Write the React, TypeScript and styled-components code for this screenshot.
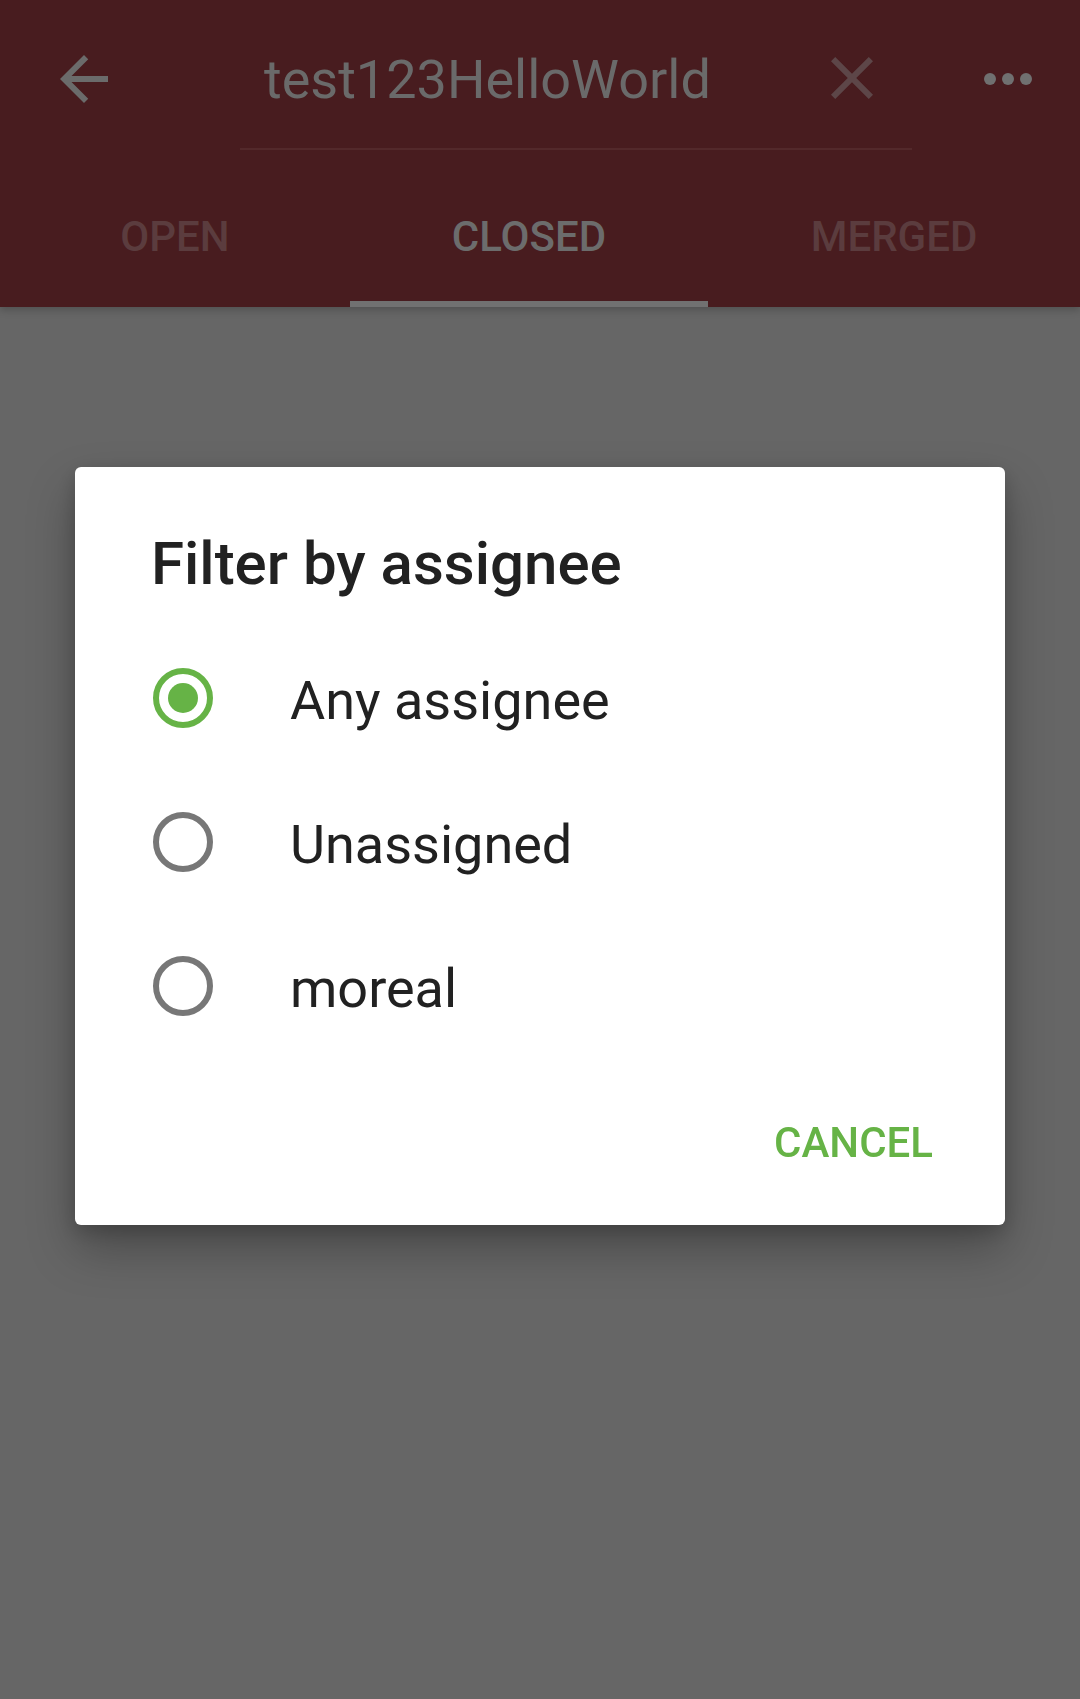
import React from 'react'
import styled, { createGlobalStyle } from 'styled-components'

const GlobalStyle = createGlobalStyle`
  html, body {
    margin: 0;
    padding: 0;
    height: 100%;
    overflow: hidden;
    background: #666666;
    font-family: Roboto, 'Noto Sans', 'Liberation Sans', sans-serif;
  }
  #root {
    height: 100%;
  }
`

const tabs = [
  { label: 'Open', width: '350px' },
  { label: 'Closed', width: '358px', active: true },
  { label: 'Merged', width: '1fr' },
]

const options = [
  { label: 'Any assignee', checked: true },
  { label: 'Unassigned' },
  { label: 'moreal' },
]

const App = () => {
  return (
    <Screen>
      <GlobalStyle />
      <Header>
        <Toolbar>
          <NavButton>
            <svg width="72" height="72" viewBox="0 0 24 24">
              <path fill="#6b6b6b" d="M20 11H7.83l5.59-5.59L12 4l-8 8 8 8 1.41-1.41L7.83 13H20v-2z" />
            </svg>
          </NavButton>
          <SearchField>
            <SearchText>test123HelloWorld</SearchText>
            <ClearButton>
              <svg width="72" height="72" viewBox="0 0 24 24">
                <path
                  fill="#5d4648"
                  d="M19 6.41L17.59 5 12 10.59 6.41 5 5 6.41 10.59 12 5 17.59 6.41 19 12 13.41 17.59 19 19 17.59 13.41 12z"
                />
              </svg>
            </ClearButton>
          </SearchField>
          <OverflowButton>
            <svg width="72" height="72" viewBox="0 0 24 24">
              <circle cx="6" cy="12" r="2" fill="#707070" />
              <circle cx="12" cy="12" r="2" fill="#707070" />
              <circle cx="18" cy="12" r="2" fill="#707070" />
            </svg>
          </OverflowButton>
        </Toolbar>
        <TabBar $columns={tabs.map((t) => t.width).join(' ')}>
          {tabs.map((t) => (
            <Tab key={t.label} $active={!!t.active}>
              {t.label}
            </Tab>
          ))}
        </TabBar>
      </Header>
      <Content />

      <Scrim>
        <Dialog>
          <DialogTitle>Filter by assignee</DialogTitle>
          <OptionList>
            {options.map((o) => (
              <OptionRow key={o.label}>
                <Radio $checked={!!o.checked} />
                <OptionLabel>{o.label}</OptionLabel>
              </OptionRow>
            ))}
          </OptionList>
          <ButtonBar>
            <TextButton>Cancel</TextButton>
          </ButtonBar>
        </Dialog>
      </Scrim>
    </Screen>
  )
}

const Screen = styled.div`
  height: 100%;
  display: flex;
  flex-direction: column;
`

const Header = styled.header`
  background-color: #481c1f;
  box-shadow: 0 3px 8px rgba(0, 0, 0, 0.22);
  position: relative;
  z-index: 1;
`

const Toolbar = styled.div`
  height: 158px;
  display: flex;
  align-items: flex-start;
`

const NavButton = styled.div`
  width: 168px;
  height: 158px;
  flex: none;
  display: flex;
  align-items: center;
  justify-content: center;
`

const SearchField = styled.div`
  flex: 1;
  margin-left: 72px;
  margin-right: 24px;
  height: 150px;
  box-sizing: border-box;
  border-bottom: 2px solid #53292b;
  padding: 42px 24px 0 24px;
  display: flex;
  align-items: flex-start;
`

const SearchText = styled.div`
  flex: 1;
  margin-top: 6px;
  font-size: 54px;
  line-height: 64px;
  color: #6a6a6a;
  white-space: nowrap;
`

const ClearButton = styled.div`
  width: 72px;
  height: 72px;
  display: flex;
`

const OverflowButton = styled.div`
  width: 144px;
  height: 158px;
  flex: none;
  display: flex;
  align-items: center;
  justify-content: center;
`

const TabBar = styled.div<{ $columns: string }>`
  display: grid;
  grid-template-columns: ${(p) => p.$columns};
  height: 149px;
`

const Tab = styled.div<{ $active: boolean }>`
  display: flex;
  align-items: center;
  justify-content: center;
  box-sizing: border-box;
  padding-top: 14px;
  font-size: 42px;
  font-weight: 500;
  text-transform: uppercase;
  color: ${(p) => (p.$active ? '#6c6c6c' : '#5b3c3e')};
  border-bottom: 6px solid ${(p) => (p.$active ? '#717171' : 'transparent')};
`

const Content = styled.main`
  flex: 1;
  background-color: #666666;
`

const Scrim = styled.div`
  position: fixed;
  inset: 0;
  z-index: 2;
  display: flex;
  align-items: center;
  justify-content: center;
  padding: 0 75px 7px;
`

const Dialog = styled.div`
  width: 100%;
  background: #ffffff;
  border-radius: 6px;
  box-shadow: 0 24px 48px rgba(0, 0, 0, 0.28), 0 6px 20px rgba(0, 0, 0, 0.18);
  padding: 62px 72px 58px 0;
  display: flex;
  flex-direction: column;
`

const DialogTitle = styled.h2`
  margin: 0 0 27px 76px;
  font-size: 60px;
  line-height: 70px;
  font-weight: 500;
  color: #212121;
`

const OptionList = styled.div`
  display: flex;
  flex-direction: column;
`

const OptionRow = styled.div`
  height: 144px;
  display: flex;
  align-items: center;
  padding-left: 78px;
  gap: 77px;
`

const Radio = styled.span<{ $checked: boolean }>`
  width: 60px;
  height: 60px;
  flex: none;
  box-sizing: border-box;
  border-radius: 50%;
  border: 6px solid ${(p) => (p.$checked ? '#66b346' : '#777777')};
  display: flex;
  align-items: center;
  justify-content: center;

  &::after {
    content: '';
    width: 30px;
    height: 30px;
    border-radius: 50%;
    background: #66b346;
    display: ${(p) => (p.$checked ? 'block' : 'none')};
  }
`

const OptionLabel = styled.span`
  padding-top: 6px;
  font-size: 54px;
  line-height: 64px;
  color: #212121;
`

const ButtonBar = styled.div`
  margin-top: 61px;
  display: flex;
  justify-content: flex-end;
`

const TextButton = styled.span`
  font-size: 42px;
  line-height: 48px;
  font-weight: 500;
  text-transform: uppercase;
  color: #66b346;
`

export default App
